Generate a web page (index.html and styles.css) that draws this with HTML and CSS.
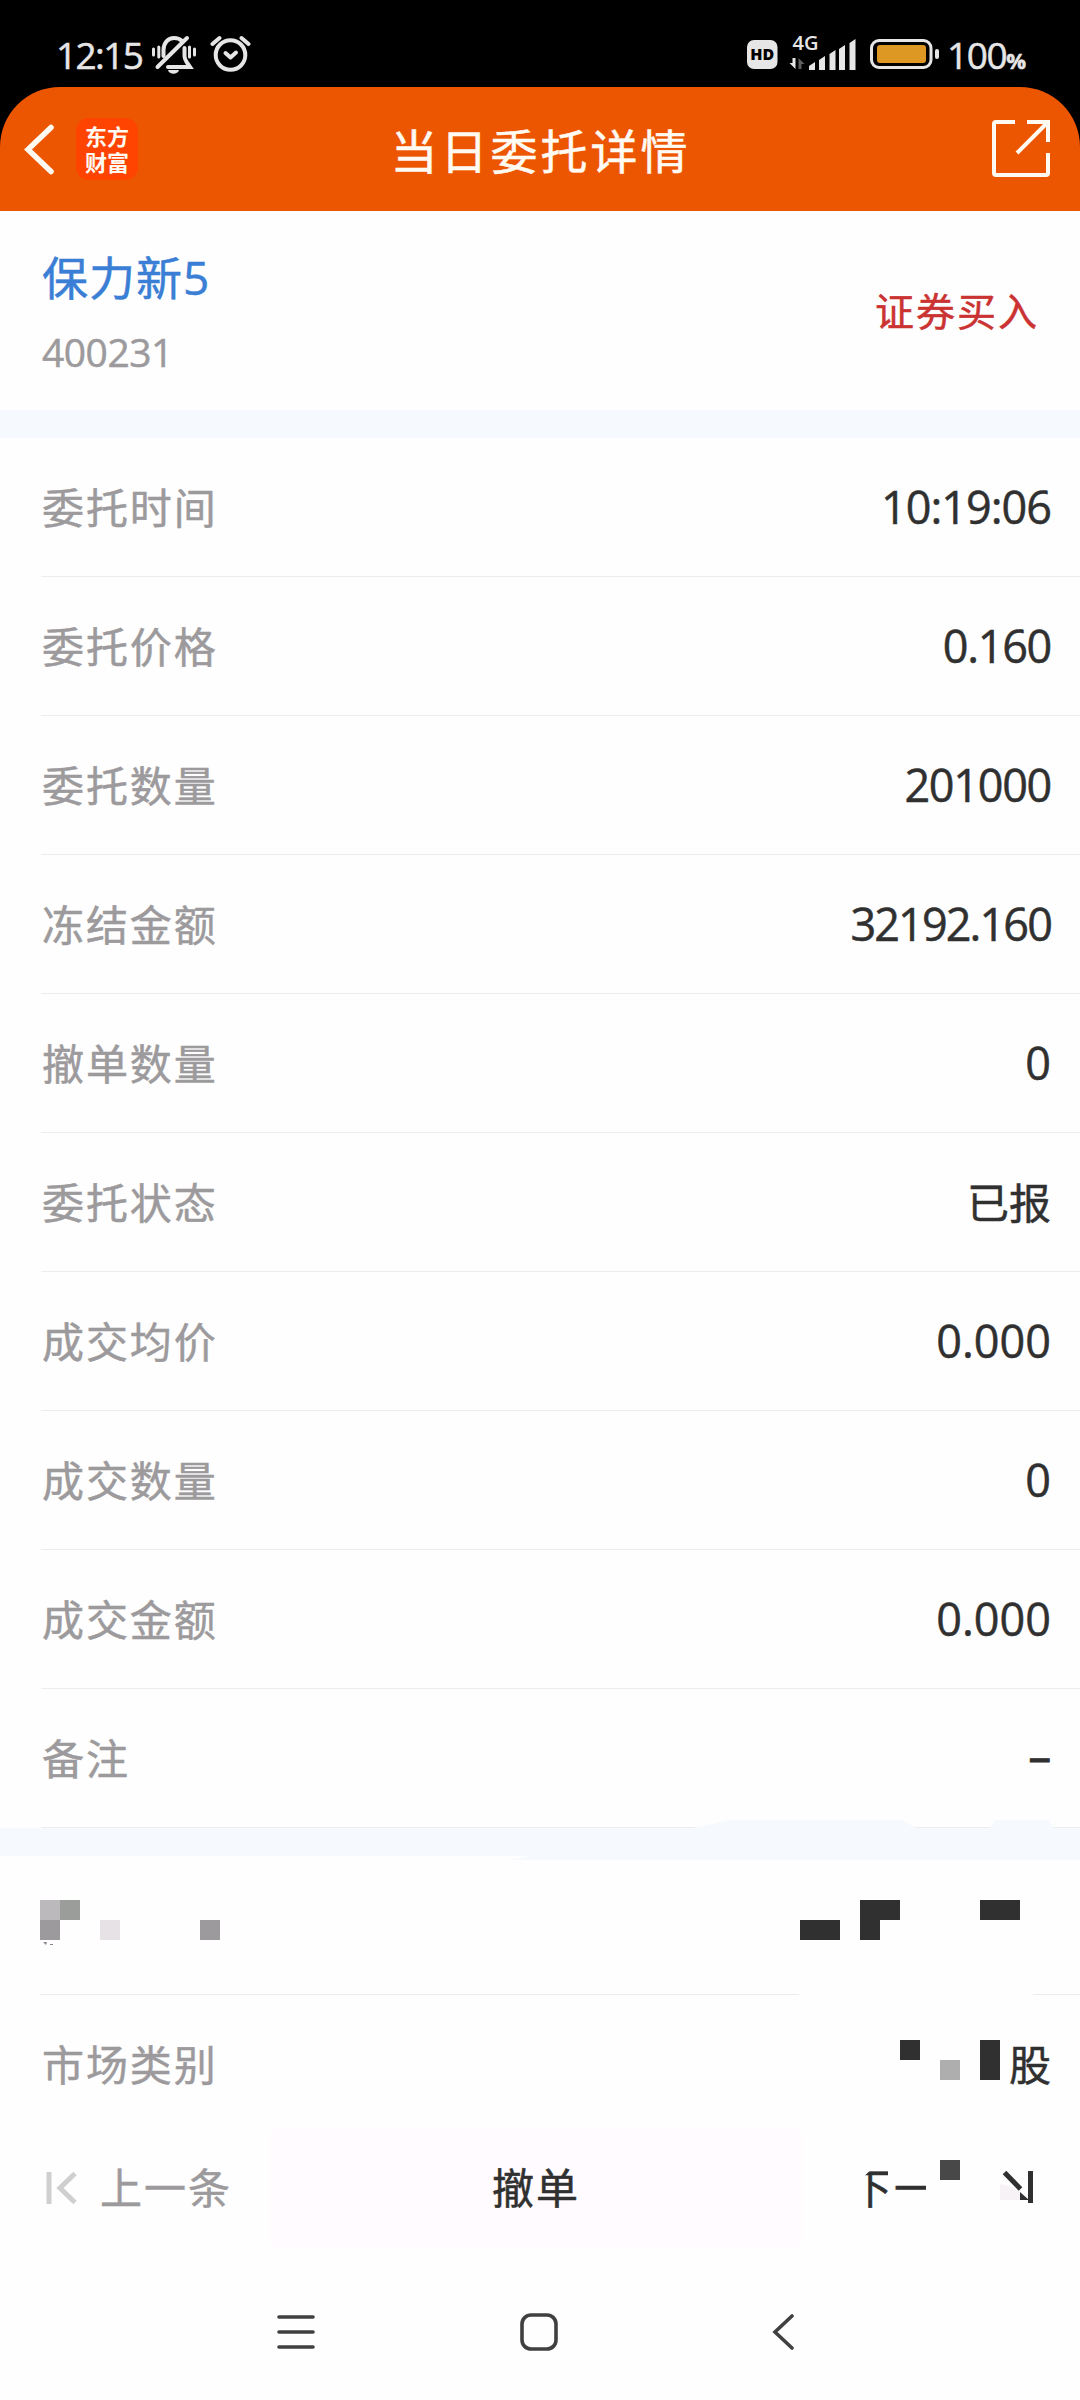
FILE: index.html
```
<!DOCTYPE html>
<html lang="zh-CN">
<head>
    <meta charset="UTF-8">
    <meta name="viewport" content="width=device-width, initial-scale=1.0">
    <title>当日委托详情</title>
    <link rel="stylesheet" href="styles.css">
</head>
<body>
    <div class="status-bar">
        <span class="clock">12:15</span>
        <svg class="status-left" width="100" height="40" viewBox="151 35 100 40">
            <!-- muted bell -->
            <g fill="none" stroke="#e6e6e6" stroke-width="4" stroke-linecap="round">
                <path d="M153.500 49v6M158.800 47v10M189.500 47v10M194.500 49v6" stroke-width="3"/>
                <path d="M163.500 56v-6c0-7 4.500-12 10.500-12 3 0 6 1 8 3M184.500 48v8c0 4 2 6 5.500 11h-22"/>
                <path d="M157.500 67L187 38"/>
            </g>
            <path d="M168 70h11c-1 5-10 5-11 0z" fill="#e6e6e6"/>
            <!-- alarm -->
            <g fill="none" stroke="#e6e6e6" stroke-width="4" stroke-linecap="round" stroke-linejoin="round">
                <circle cx="230.500" cy="55" r="14.800"/>
                <path d="M225.500 53l5 4.500 5.500-5"/>
                <path d="M212.500 44l7-6M241.500 38l7 6"/>
            </g>
        </svg>
        <svg class="status-right" width="196" height="48" viewBox="746 27 196 48">
            <rect x="747" y="40" width="30.500" height="29" rx="7" fill="#e6e6e6"/>
            <text class="hd" x="762.300" y="60">HD</text>
            <text class="net" x="792.500" y="50">4G</text>
            <path d="M795.500 58v11l-6-6h3v-5z" fill="#e6e6e6"/>
            <path d="M798.500 69V58l6 6h-3v5z" fill="#5c605f"/>
            <path d="M809 70v-4l6-4v8zM819 70V60l6-4v14zM829.500 70V54l6-4v20zM839 70V49l6-4v25zM849.500 70V43l6-4v31z" fill="#e6e6e6"/>
            <rect x="871.500" y="40.500" width="59.500" height="27" rx="7.500" fill="none" stroke="#e6e6e6" stroke-width="3"/>
            <rect x="877" y="45" width="49" height="18" rx="3" fill="#dd9723"/>
            <rect x="935" y="49" width="4" height="10" rx="2" fill="#e6e6e6"/>
        </svg>
        <span class="battery">100<small>%</small></span>
    </div>

    <header class="top-bar">
        <svg class="back" width="34" height="56" viewBox="22 120 34 56">
            <path d="M51 126.500L28 148.500l23 22" fill="none" stroke="#fffaf2" stroke-width="5.500" stroke-linecap="round"/>
        </svg>
        <div class="logo">东方<br>财富</div>
        <h1>当日委托详情</h1>
        <svg class="share" width="60" height="60" viewBox="991 119 60 60">
            <path d="M1015 122h-19q-2 0-2 2v49q0 2 2 2h50q2 0 2-2v-20M1027 122h21v20M1017 153l31-31" fill="none" stroke="#fffaf2" stroke-width="4"/>
        </svg>
    </header>

    <section class="stock">
        <div>
            <h2>保力新5</h2>
            <p>400231</p>
        </div>
        <span class="side">证券买入</span>
    </section>

    <main class="list">
        <div class="row"><span>委托时间</span><b class="time">10:19:06</b></div>
        <div class="row"><span>委托价格</span><b class="tight">0.160</b></div>
        <div class="row"><span>委托数量</span><b class="tight">201000</b></div>
        <div class="row"><span>冻结金额</span><b class="tighter">32192.160</b></div>
        <div class="row"><span>撤单数量</span><b>0</b></div>
        <div class="row"><span>委托状态</span><b class="cn">已报</b></div>
        <div class="row"><span>成交均价</span><b>0.000</b></div>
        <div class="row"><span>成交数量</span><b>0</b></div>
        <div class="row"><span>成交金额</span><b>0.000</b></div>
        <div class="row"><span>备注</span><b class="dash">–</b></div>
    </main>

    <svg class="band" width="1080" height="40" viewBox="0 1820 1080 40">
        <path d="M0 1828h693l38-8h170l16 8h73l5-8h54l5 8h26v32H510l19-4H0z" fill="#f6faff"/>
    </svg>

    <section class="list">
        <!-- account row is masked -->
        <div class="row masked">
            <svg width="180" height="48" viewBox="40 1900 180 48">
                <path d="M40 1900h20v20H40z" fill="#bbb9bb"/>
                <path d="M60 1900h20v20H60z" fill="#9b9d9a"/>
                <path d="M40 1920h20v20H40zM200 1920h20v20h-20z" fill="#9c9a9c"/>
                <path d="M100 1920h20v20h-20z" fill="#e6e2e5"/>
                <path d="M43 1942h4l-1 3zM50 1944h3v1h-3z" fill="#888"/>
            </svg>
            <svg width="220" height="48" viewBox="800 1900 220 48">
                <path d="M800 1920h40v20h-40zM860 1900h40v20h-20v20h-20zM980 1900h40v20h-40z" fill="#303030"/>
            </svg>
        </div>
        <div class="row market">
            <span>市场类别</span>
            <b class="cn">
                <svg width="100" height="40" viewBox="900 2040 100 40">
                    <path d="M900 2040h20v20h-20zM980 2040h20v40h-20z" fill="#303030"/>
                    <path d="M940 2060h20v20h-20z" fill="#aeaeae"/>
                </svg>股
            </b>
        </div>
    </section>

    <footer class="actions">
        <div class="prev">
            <svg width="32" height="36" viewBox="45 2169 32 36">
                <path d="M49 2171v32M75 2172.500L60 2187l15 14.500" fill="none" stroke="#d0cfd0" stroke-width="5"/>
            </svg>
            <span>上一条</span>
        </div>
        <button type="button">撤单</button>
        <div class="next">
            <span>下一</span>
            <svg width="100" height="48" viewBox="936 2158 100 48">
                <path d="M940 2160h20v20h-20z" fill="#484848"/>
                <path d="M1000 2184q12 2 20 8v8h-20z" fill="#f6f2f5"/>
                <path d="M1004.500 2172.500l16 16.500M1030.500 2171v32" fill="none" stroke="#303030" stroke-width="5"/>
                <path d="M1020 2192l9 8h-9z" fill="#303030"/>
            </svg>
        </div>
    </footer>

    <nav class="system-nav">
        <svg width="38" height="38" viewBox="0 0 38 38"><path d="M2 4h34M2 19h34M2 34h34"/></svg>
        <svg width="38" height="38" viewBox="0 0 38 38"><rect x="2" y="2" width="34" height="34" rx="9"/></svg>
        <svg width="22" height="38" viewBox="0 0 22 38"><path d="M20 3L3 19l17 16"/></svg>
    </nav>
</body>
</html>
```
FILE: styles.css
```
* {
    box-sizing: border-box;
}

body {
    margin: 0;
    width: 1080px;
    height: 2400px;
    overflow: hidden;
    background: linear-gradient(#000 200px, #fefefe 200px);
    font-family: "Open Sans", "Noto Sans CJK SC", sans-serif;
    color: #303030;
    -webkit-text-stroke: 0.5px;
}

svg {
    display: block;
    flex: none;
}

h1, h2, p {
    margin: 0;
    font-weight: normal;
}

/* status bar */
.status-bar {
    height: 87px;
    padding: 35px 54px 12px 56px;
    display: flex;
    align-items: flex-start;
    background: #000;
    color: #e6e6e6;
    line-height: 40px;
}

.clock {
    width: 95px;
    font-size: 37px;
    font-weight: 500;
    letter-spacing: -1.6px;
}

.status-right {
    margin-top: -8px;
    margin-left: auto;
}

.hd {
    font: 800 16px "Open Sans", sans-serif;
    text-anchor: middle;
    fill: #000;
    -webkit-text-stroke: 0;
}

.net {
    font: 600 20px "Open Sans", sans-serif;
    fill: #e6e6e6;
    -webkit-text-stroke: 0;
}

.battery {
    width: 84px;
    padding-left: 5px;
    font-size: 37px;
    font-weight: 500;
    letter-spacing: -1.4px;
    white-space: nowrap;
}

.battery small {
    font-size: 22px;
    font-weight: 700;
}

/* title bar */
.top-bar {
    height: 124px;
    padding: 0 29px 0 22px;
    display: grid;
    grid-template-columns: 54px 62px 1fr 110px;
    align-items: center;
    background: #ed5600;
    border-radius: 60px 60px 0 0;
    color: #fffaf2;
}

.logo {
    height: 62px;
    padding-top: 4px;
    border-radius: 13px;
    background: #ff4300;
    font: 700 22px/26px "Noto Sans CJK SC", sans-serif;
    text-align: center;
    -webkit-text-stroke: 0;
}

.top-bar h1 {
    padding: 3px 0 0 2px;
    font-size: 47px;
    letter-spacing: 3px;
    line-height: 60px;
    text-align: center;
}

.share {
    justify-self: end;
}

/* stock name */
.stock {
    height: 199px;
    padding: 7px 42px 0 42px;
    display: flex;
    justify-content: space-between;
    align-items: center;
    background: #fefefe;
}

.stock h2 {
    font-size: 46px;
    line-height: 66px;
    letter-spacing: 1px;
    color: #3a7fd5;
}

.stock p {
    margin-top: 9px;
    font-size: 39px;
    line-height: 66px;
    letter-spacing: -0.5px;
    color: #9c9a9c;
}

.side {
    padding-bottom: 10px;
    margin-right: -1px;
    font-size: 39px;
    letter-spacing: 2px;
    color: #cb3232;
}

/* detail rows */
.list {
    background: #fefefe;
}

.stock + .list {
    border-top: 28px solid #f6faff;
}

.row {
    height: 139px;
    padding-right: 29px;
    margin-left: 41px;
    display: flex;
    justify-content: space-between;
    align-items: center;
    border-bottom: 1px solid #ececec;
    font-size: 42px;
    line-height: 60px;
}

.row span {
    padding: 1px 0 0 1px;
    letter-spacing: 1.9px;
    color: #9c9a9c;
}

.row b {
    font-size: 45px;
    font-weight: normal;
}

.row .time {
    letter-spacing: -1px;
}

.row .tight {
    letter-spacing: -1.3px;
}

.row .tighter {
    letter-spacing: -1.9px;
}

.row .cn {
    padding-top: 1px;
    display: flex;
    align-items: center;
    gap: 10px;
    font-size: 42px;
}

.row .dash {
    padding-bottom: 4px;
    -webkit-text-stroke: 1px;
}

.band {
    margin: -8px 0 -4px;
    position: relative;
}

.masked {
    padding: 0 60px 4px 0;
    margin-left: 40px;
    border-bottom: 0;
    background: linear-gradient(90deg, #ececec 759px, transparent 759px 993px, #ececec 993px) bottom / 100% 1px no-repeat;
}

.list .market {
    height: 132px;
    padding-top: 7px;
    border: 0;
}

.market svg {
    margin: -10px -1px 0 0;
}

/* bottom buttons */
.actions {
    height: 121px;
    display: grid;
    grid-template-columns: 270px 532px 1fr;
    font-size: 42px;
    line-height: 60px;
}

.prev {
    padding-left: 45px;
    display: flex;
    align-items: center;
    gap: 23px;
    letter-spacing: 2px;
    color: #9c9a9c;
}

.actions button {
    padding: 0;
    border: 0;
    border-radius: 8px;
    background: #fffbff;
    color: #303030;
    font: inherit;
    letter-spacing: 2px;
}

.next {
    padding-left: 48px;
    display: flex;
    align-items: center;
}

.next span {
    width: 86px;
    letter-spacing: 2px;
    white-space: nowrap;
    clip-path: polygon(15px 18px, 23px 10px, 38px 10px, 38px 24px, 76px 24px, 76px 60px, 15px 60px);
}

.next svg {
    margin-top: -12px;
}

/* android navigation */
.system-nav {
    height: 152px;
    padding: 16px 286px 0 277px;
    display: grid;
    grid-template-columns: 243px 1fr 22px;
    align-items: center;
}

.system-nav svg {
    fill: none;
    stroke: #404040;
    stroke-width: 3.6;
    stroke-linecap: round;
}
```
